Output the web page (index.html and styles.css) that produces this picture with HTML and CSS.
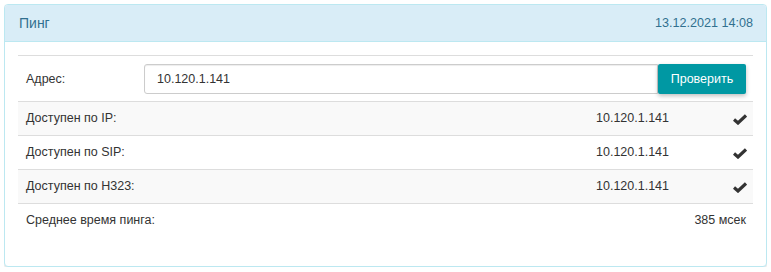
FILE: index.html
```html
<!DOCTYPE html>
<html lang="ru">
<head>
    <meta charset="UTF-8">
    <title>Пинг</title>
    <link rel="stylesheet" href="styles.css">
</head>
<body>

<div class="panel">
    <div class="panel-heading">
        <span class="panel-title">Пинг</span>
        <span class="panel-date">13.12.2021 14:08</span>
    </div>

    <div class="panel-body">
        <div class="form-row">
            <label class="form-label" for="address">Адрес:</label>
            <input class="form-input" type="text" id="address" value="10.120.1.141">
            <button class="check-btn">Проверить</button>
        </div>

        <table class="result-table">
            <tr>
                <td>Доступен по IP:</td>
                <td class="value">10.120.1.141</td>
                <td class="status"><svg class="check" viewBox="0 0 14 11" width="14" height="11"><path d="M1 5.5 L5 9 L13 1.5"/></svg></td>
            </tr>
            <tr>
                <td>Доступен по SIP:</td>
                <td class="value">10.120.1.141</td>
                <td class="status"><svg class="check" viewBox="0 0 14 11" width="14" height="11"><path d="M1 5.5 L5 9 L13 1.5"/></svg></td>
            </tr>
            <tr>
                <td>Доступен по H323:</td>
                <td class="value">10.120.1.141</td>
                <td class="status"><svg class="check" viewBox="0 0 14 11" width="14" height="11"><path d="M1 5.5 L5 9 L13 1.5"/></svg></td>
            </tr>
            <tr>
                <td>Среднее время пинга:</td>
                <td class="total" colspan="2">385 мсек</td>
            </tr>
        </table>
    </div>
</div>

</body>
</html>
```

FILE: styles.css
```css
body {
    font-family: "Liberation Sans", Arial, sans-serif;
    font-size: 12.5px;
    color: #333;
    background-color: #fff;
    margin: 4px;
}

.panel {
    border: 1px solid #bce8f1;
    border-radius: 4px;
    box-shadow: 0 1px 2px rgba(0, 0, 0, 0.12);
    background-color: #fff;
}

.panel-heading {
    display: flex;
    justify-content: space-between;
    align-items: center;
    height: 36px;
    padding: 0 13px 0 14px;
    background-color: #d9edf7;
    border-bottom: 1px solid #bce8f1;
    border-radius: 3px 3px 0 0;
    color: #31708f;
}

.panel-title {
    font-size: 14px;
}

.panel-date {
    font-size: 12.6px;
}

.panel-body {
    padding: 13px 13px 13px 13px;
}

.form-row {
    display: flex;
    align-items: center;
    border-top: 1px solid #ddd;
    padding: 8px 7px 7px 0;
}

.form-label {
    width: 118px;
    padding-left: 8px;
}

.form-input {
    flex: 1;
    height: 30px;
    box-sizing: border-box;
    padding: 0 12px;
    border: 1px solid #ccc;
    border-radius: 3px 0 0 3px;
    box-shadow: inset 0 1px 1px rgba(0, 0, 0, 0.075);
    font-family: inherit;
    font-size: 12.5px;
    color: #333;
}

.check-btn {
    width: 88px;
    height: 30px;
    border: none;
    border-radius: 2px;
    background-color: #0098a3;
    color: #fff;
    font-family: inherit;
    font-size: 12.5px;
    box-shadow: 0 2px 4px rgba(0, 0, 0, 0.25);
    cursor: pointer;
}

.result-table {
    width: 100%;
    border-collapse: collapse;
    margin-bottom: 16px;
}

.result-table td {
    border-top: 1px solid #ddd;
    padding: 10px 8px;
    line-height: 13px;
}

.result-table tr:nth-child(odd) td {
    background-color: #f9f9f9;
}

.result-table .value {
    text-align: right;
}

.result-table .status {
    width: 62px;
    text-align: right;
    padding-right: 6px;
}

.result-table .total {
    text-align: right;
    padding-right: 7px;
}

.check {
    display: block;
    margin-left: auto;
    margin-top: 2px;
}

.check path {
    fill: none;
    stroke: #333;
    stroke-width: 3.2;
}
```
